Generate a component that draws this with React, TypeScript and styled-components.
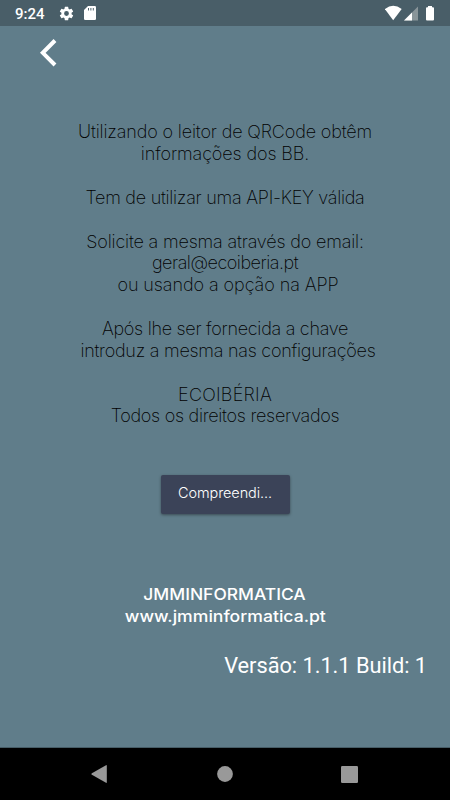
import React from "react";
import styled, { createGlobalStyle } from "styled-components";

const GlobalStyle = createGlobalStyle`
  body { margin: 0; background: #607d8a; }
  * { box-sizing: border-box; }
`;

const Screen = styled.div`
  width: 450px;
  height: 800px;
  display: flex;
  flex-direction: column;
  overflow: hidden;
  background: #607d8a;
  font-family: Inter, "Liberation Sans", sans-serif;
`;

const StatusBar = styled.header`
  flex: none;
  height: 26px;
  display: flex;
  align-items: center;
  justify-content: space-between;
  padding: 0 15px;
  background: #495e68;
`;

const StatusGroup = styled.div<{ $gap: number }>`
  display: flex;
  align-items: center;
  gap: ${(p) => p.$gap}px;
`;

const Clock = styled.span`
  width: 31px;
  margin-right: 2px;
  padding-top: 2px;
  font: 500 15px/24px Roboto, sans-serif;
  color: #fff;
  white-space: nowrap;
`;

const Icon = styled.svg`
  display: block;
  flex: none;
`;

const Body = styled.main`
  flex: 1;
  display: flex;
  flex-direction: column;
  align-items: center;
`;

const BackButton = styled.button`
  align-self: flex-start;
  margin: 12px 0 0 38px;
  padding: 0;
  border: 0;
  width: 20px;
  height: 30px;
  background: none;
`;

const Message = styled.section`
  width: 100%;
  margin-top: 53.4px;
  display: flex;
  flex-direction: column;
  gap: 21.85px;
`;

const Paragraph = styled.div`
  display: flex;
  flex-direction: column;
  align-items: center;
`;

const Line = styled.span<{ $tracking: number; $shift?: number }>`
  font-size: 18px;
  font-weight: 250;
  line-height: 21.85px;
  letter-spacing: ${(p) => p.$tracking}px;
  margin-left: ${(p) => p.$shift ?? 0}px;
  color: #000;
  white-space: nowrap;
`;

const ConfirmButton = styled.button`
  width: 129px;
  height: 39px;
  margin: 48px 0 0;
  padding: 0 0 4px;
  border: 0;
  border-radius: 2px;
  background: #3b4358;
  box-shadow: 0 1px 3px rgba(0, 0, 0, 0.4);
  color: #fff;
  font: 300 14.5px/20px Inter, sans-serif;
  letter-spacing: -0.1px;
`;

const Brand = styled.footer`
  margin-top: 69px;
  display: flex;
  flex-direction: column;
  align-items: center;
`;

const BrandLine = styled.span<{ $stretch: number }>`
  font: 500 16px/22px Inter, sans-serif;
  color: #fff;
  transform: scaleX(${(p) => p.$stretch});
`;

const Version = styled.div`
  align-self: flex-end;
  margin: 26px 23px 0 0;
  font: 400 21.8px/26px Roboto, sans-serif;
  letter-spacing: -0.04px;
  color: #fff;
`;

const NavBar = styled.nav`
  flex: none;
  height: 53px;
  display: flex;
  align-items: center;
  justify-content: space-between;
  padding: 0 92px 0 90px;
  border-top: 1px solid #465c66;
  background: #000;
`;

const paragraphs: { text: string; tracking: number; shift?: number }[][] = [
  [
    { text: "Utilizando o leitor de QRCode obtêm", tracking: -0.15 },
    { text: "informações dos BB.", tracking: -0.12 },
  ],
  [{ text: "Tem de utilizar uma API-KEY válida", tracking: -0.26 }],
  [
    { text: "Solicite a mesma através do email:", tracking: -0.17 },
    { text: "geral@ecoiberia.pt", tracking: -0.47 },
    { text: "ou usando a opção na APP", tracking: -0.07, shift: 6 },
  ],
  [
    { text: "Após lhe ser fornecida a chave", tracking: -0.28 },
    { text: "introduz a mesma nas configurações", tracking: -0.26, shift: 6 },
  ],
  [
    { text: "ECOIBÉRIA", tracking: 0.25 },
    { text: "Todos os direitos reservados", tracking: -0.28 },
  ],
];

const GearIcon = () => (
  <Icon width="17" height="17" viewBox="0 0 24 24" fill="#fff">
    <path d="M19.14 12.94c.04-.3.06-.61.06-.94s-.02-.64-.07-.94l2.03-1.58a.49.49 0 0 0 .12-.61l-1.92-3.32a.49.49 0 0 0-.59-.22l-2.39.96a7 7 0 0 0-1.62-.94l-.36-2.54a.48.48 0 0 0-.48-.41h-3.84a.48.48 0 0 0-.47.41l-.36 2.54a7.4 7.4 0 0 0-1.62.94l-2.39-.96a.48.48 0 0 0-.59.22L2.74 8.87a.48.48 0 0 0 .12.61l2.03 1.58c-.05.3-.09.63-.09.94s.02.64.07.94l-2.03 1.58a.49.49 0 0 0-.12.61l1.92 3.32c.12.22.37.29.59.22l2.39-.96c.5.38 1.03.7 1.62.94l.36 2.54c.05.24.24.41.48.41h3.84c.24 0 .44-.17.47-.41l.36-2.54a7.3 7.3 0 0 0 1.62-.94l2.39.96c.22.08.47 0 .59-.22l1.92-3.32a.48.48 0 0 0-.12-.61zM12 15.4a3.4 3.4 0 1 1 0-6.8 3.4 3.4 0 0 1 0 6.8z" />
  </Icon>
);

const CardIcon = () => (
  <Icon width="12" height="14" viewBox="0 0 12 14">
    <path fill="#fff" d="M4 0h6.8Q12 0 12 1.2v11.6Q12 14 10.8 14H1.2Q0 14 0 12.8V4z" />
    <path stroke="#52666f" strokeWidth="1" d="M4.5 2v2.5M6.9 2v2.5M9.3 2v2.5" />
  </Icon>
);

export default function App() {
  return (
    <Screen>
      <GlobalStyle />
      <StatusBar>
        <StatusGroup $gap={9.5}>
          <Clock>9:24</Clock>
          <GearIcon />
          <CardIcon />
        </StatusGroup>
        <StatusGroup $gap={0}>
          <Icon width="50" height="16" viewBox="385 5 50 16">
            <path fill="#fff" d="M384.9 9Q393.2 2.3 401.7 9L393.2 20.3z" />
            <path fill="#899599" d="M418 6.5v14h-14z" />
            <path fill="#fff" d="M412 12.5v8h-8z" />
            <path fill="#fff" d="M428 6h4v1.2h1q1 0 1 1V19.6q0 1-1 1h-6q-1 0-1-1V8.2q0-1 1-1h1z" />
          </Icon>
        </StatusGroup>
      </StatusBar>
      <Body>
        <BackButton aria-label="Voltar">
          <Icon width="20" height="30" viewBox="38 38 20 30">
            <path fill="none" stroke="#fff" strokeWidth="4" d="M55 40.5L42.8 52.8L55 65" />
          </Icon>
        </BackButton>
        <Message>
          {paragraphs.map((lines) => (
            <Paragraph key={lines[0].text}>
              {lines.map((line) => (
                <Line key={line.text} $tracking={line.tracking} $shift={line.shift}>
                  {line.text}
                </Line>
              ))}
            </Paragraph>
          ))}
        </Message>
        <ConfirmButton>Compreendi...</ConfirmButton>
        <Brand>
          <BrandLine $stretch={1.09}>JMMINFORMATICA</BrandLine>
          <BrandLine $stretch={1.1}>www.jmminformatica.pt</BrandLine>
        </Brand>
        <Version>Versão: 1.1.1 Build: 1</Version>
      </Body>
      <NavBar>
        <Icon width="18" height="18" viewBox="0 0 18 18">
          <path fill="#999" d="M1.9 8.2L16 .2q.8-.3.8.5v16.6q0 .8-.8.5L1.9 9.8q-1-.8 0-1.6z" />
        </Icon>
        <Icon width="16" height="16" viewBox="0 0 16 16">
          <circle cx="8" cy="8" r="7.9" fill="#999" />
        </Icon>
        <Icon width="17" height="17" viewBox="0 0 17 17">
          <rect width="17" height="17" rx="1.2" fill="#999" />
        </Icon>
      </NavBar>
    </Screen>
  );
}
